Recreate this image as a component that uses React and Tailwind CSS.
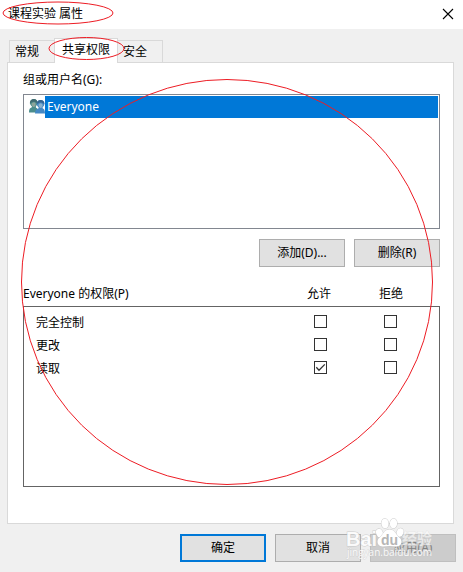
import React, { useState } from 'react'

const tabs = ['常规', '共享权限', '安全']

const permissions = [
    { id: 'full', name: '完全控制', allow: false, deny: false },
    { id: 'change', name: '更改', allow: false, deny: false },
    { id: 'read', name: '读取', allow: true, deny: false },
]

const CheckBox = ({ label, defaultChecked }) => {
    const [checked, setChecked] = useState(defaultChecked)

    return (
        <span className="inline-grid align-top">
            <input
                type="checkbox"
                aria-label={label}
                checked={checked}
                onChange={(e) => setChecked(e.target.checked)}
                className="col-start-1 row-start-1 h-[13px] w-[13px] appearance-none border border-[#333] bg-white"
            />
            {checked && (
                <svg viewBox="0 0 13 13" className="pointer-events-none col-start-1 row-start-1 h-[13px] w-[13px]" aria-hidden="true">
                    <path d="M2.3 6.3 5 9.2 10.8 3.4" fill="none" stroke="#333" strokeWidth="1.3" />
                </svg>
            )}
        </span>
    )
}

const Button = ({ children, primary, disabled }) => (
    <button
        type="button"
        disabled={disabled}
        className={
            'h-7 w-[86px] text-center ' +
            (primary
                ? 'border-2 border-[#0078d7] bg-[#e1e1e1]'
                : disabled
                    ? 'border border-[#bfbfbf] bg-[#ccc] text-[#838383]'
                    : 'border border-[#adadad] bg-[#e1e1e1]')
        }
    >
        {children}
    </button>
)

const UsersIcon = () => (
    <svg viewBox="0 0 16 16" className="h-4 w-4 shrink-0" aria-hidden="true">
        <path d="M0 13.5c0-3.500 1-4.500 2.600-4.900L3 7.500C1.500 6.500.8 5 .9 3.600 1 1.200 2.600 0 4.800 0S8.600 1.400 8.600 3.600c0 1.500-.7 3-1.800 3.900L7 8.700c1.500.5 2.500 2 2.500 4.800z" fill="#4b8d8c" />
        <path d="M2.500 5c.2-1.300 1.500-1.200 2.500-1.700.8.300 1.500.7 1.700 1.700C6.500 6.800 6 8 4.800 8S2.700 6.500 2.500 5z" fill="#8fa59a" />
        <path d="M.9 4.500C.9 1.500 2.600 0 4.800 0S8.600 1.500 8.600 4.500C7 3.300 6 2.700 4.800 2.700s-2.400.6-3.900 1.800z" fill="#416a70" />
        <path d="M6 14.500c0-3.200 1.500-4.600 3.400-5.100l.3-1C8.400 7.500 7.700 6.200 7.800 4.600 7.900 2.200 9.400 1 11.600 1s3.800 1.300 3.800 3.600c0 1.500-.7 2.900-1.900 3.800l.3 1c1.500.5 2.200 2 2.200 5.100z" fill="#4488c4" />
        <path d="M9.500 6c.3-1.300 1.200-1.400 2.200-1.800.8.300 1.700.6 2 1.800-.1 1.700-.9 3-2 3S9.600 7.600 9.500 6z" fill="#8db2cc" />
        <path d="M7.800 5.300C7.700 2.400 9.400 1 11.600 1s3.900 1.400 3.800 4.300C14 4.200 12.900 3.600 11.600 3.600s-2.400.6-3.800 1.700z" fill="#37658f" />
    </svg>
)

const Watermark = () => (
    <svg width="92" height="50" viewBox="0 0 92 50" className="pointer-events-none absolute top-[514px] left-[345px]" aria-hidden="true">
        <g fill="#fff" stroke="#bcbcbc" strokeOpacity="0.7" strokeWidth="1" paintOrder="stroke" fontFamily="'Liberation Sans', 'Noto Sans CJK SC', sans-serif">
            <text x="1" y="32" fontSize="20" fontWeight="700" fillOpacity="0.9">Bai</text>
            <ellipse cx="34.500" cy="19" rx="3.300" ry="4.300" transform="rotate(-20 34.500 19)" />
            <ellipse cx="40" cy="9.500" rx="3.600" ry="4.800" transform="rotate(-6 40 9.500)" />
            <ellipse cx="48.500" cy="9.500" rx="3.600" ry="4.800" transform="rotate(6 48.500 9.500)" />
            <ellipse cx="55" cy="18.500" rx="3.300" ry="4.300" transform="rotate(20 55 18.500)" />
            <path d="M44.500 15.500c4 0 5.500 3 7.500 5.500s4.500 3.500 4.500 6.800c0 3.700-3 4.700-6 4.700-2 0-4-.5-6-.5s-4 .5-6 .5c-3 0-6-1-6-4.700 0-3.300 2.500-4.300 4.500-6.800s3.500-5.500 7.500-5.500z" />
            <text x="57" y="30" fontSize="15" fontWeight="700" strokeOpacity="0.2" fillOpacity="0.6">经验</text>
        </g>
        <text x="36" y="31" fontSize="14" fontWeight="700" fill="#b5b5b5" fontFamily="'Liberation Sans', sans-serif">du</text>
        <text x="2" y="42" fontSize="10" fill="#fff" fillOpacity="0.9" stroke="#c8c8c8" strokeOpacity="0.5" strokeWidth="1" paintOrder="stroke" fontFamily="'Open Sans', sans-serif">jingyan.baidu.com</text>
    </svg>
)

// hand drawn marks over the dialog
const Marks = () => (
    <svg width="463" height="572" viewBox="0 0 463 572" className="pointer-events-none absolute top-0 left-0" aria-hidden="true">
        <g fill="none" stroke="#ed1c24" strokeWidth="1">
            <ellipse cx="58" cy="13" rx="55" ry="11" />
            <ellipse cx="86.500" cy="48.500" rx="37.500" ry="11" />
            <ellipse cx="227" cy="282" rx="205.500" ry="202.500" />
        </g>
    </svg>
)

const App = () => {
    const [active, setActive] = useState(1)

    return (
        <div className="relative min-h-screen bg-[#f0f0f0] font-['Noto_Sans','Noto_Sans_CJK_SC',sans-serif] text-[12px] leading-4 text-black">
            <header className="flex h-[29px] items-center justify-between bg-white pr-[9px] pb-[2px] pl-2">
                <h1>课程实验 属性</h1>
                <button type="button" aria-label="关闭" className="flex h-3 w-3 items-center justify-center">
                    <svg viewBox="0 0 12 12" className="h-3 w-3" aria-hidden="true">
                        <path d="M1 1 11 11M11 1 1 11" stroke="#000" strokeWidth="1.100" />
                    </svg>
                </button>
            </header>

            <main className="pt-[9px] pr-[9px] pl-[7px]">
                <div role="tablist" className="flex items-end pl-[2px]">
                    {tabs.map((tab, index) => (
                        <button
                            key={tab}
                            type="button"
                            role="tab"
                            aria-selected={active === index}
                            onClick={() => setActive(index)}
                            className={
                                active === index
                                    ? '-mb-px h-[25px] border border-b-0 border-[#d9d9d9] bg-white px-[7px] pb-[2px]'
                                    : 'h-[22px] border border-b-0 border-[#d9d9d9] pr-[15px] pl-[5px] first:border-r-0 last:border-l-0'
                            }
                        >
                            {tab}
                        </button>
                    ))}
                </div>

                <section className="border border-[#d9d9d9] bg-white pt-[9px] pr-[13px] pb-9 pl-[15px]">
                    <h2 id="users-label">组或用户名(G):</h2>
                    <ul role="listbox" aria-labelledby="users-label" className="mt-[6px] h-[135px] border border-[#828790] p-px">
                        <li role="option" aria-selected="true" className="flex items-center pl-1">
                            <UsersIcon />
                            <span className="flex-1 bg-[#0078d7] pl-[2px] leading-[22px] text-white">Everyone</span>
                        </li>
                    </ul>

                    <div className="mt-[10px] flex justify-end gap-[9px]">
                        <Button>添加(D)...</Button>
                        <Button>删除(R)</Button>
                    </div>

                    <div className="mt-[15px] flex pr-[13px] leading-6">
                        <h2 className="flex-1">Everyone 的权限(P)</h2>
                        <span className="w-[72px] text-center">允许</span>
                        <span className="w-[72px] text-center">拒绝</span>
                    </div>
                    <div className="h-[181px] border border-[#646464] pt-1 pr-[14px] pl-3">
                        <table className="w-full">
                            <tbody>
                                {permissions.map((permission) => (
                                    <tr key={permission.id} className="h-[23px]">
                                        <th scope="row" className="text-left font-normal">{permission.name}</th>
                                        <td className="w-[70px] text-center">
                                            <CheckBox label={permission.name + ' 允许'} defaultChecked={permission.allow} />
                                        </td>
                                        <td className="w-[70px] text-center">
                                            <CheckBox label={permission.name + ' 拒绝'} defaultChecked={permission.deny} />
                                        </td>
                                    </tr>
                                ))}
                            </tbody>
                        </table>
                    </div>
                </section>
            </main>

            <footer className="flex justify-end gap-[9px] pt-[10px] pr-[7px] pb-[10px]">
                <Button primary>确定</Button>
                <Button>取消</Button>
                <Button disabled>应用(A)</Button>
            </footer>

            <Watermark />
            <Marks />
        </div>
    )
}
export default App
